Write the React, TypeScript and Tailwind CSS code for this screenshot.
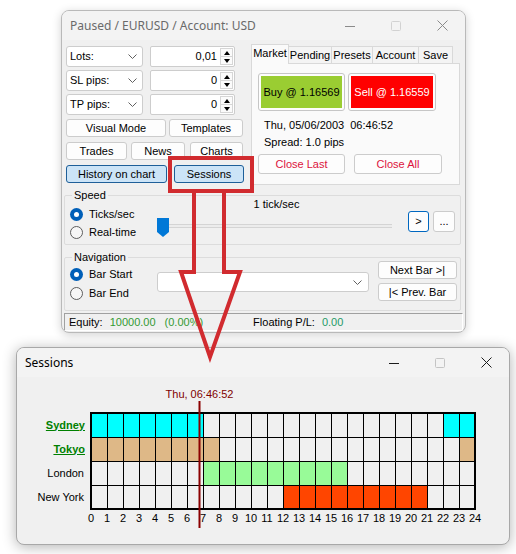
import React from "react";

function Chevron() {
  return (
    <svg width="9" height="5" viewBox="0 0 9 5">
      <polyline points="0.5,0.5 4.5,4.5 8.5,0.5" fill="none" stroke="#606060" strokeWidth="1" />
    </svg>
  );
}

function Combo({ label }: { label: string }) {
  return (
    <div className="flex items-center justify-between h-[21px] w-[77px] bg-white border border-[#cdcdcd] rounded-[3px] pl-[3px] pr-[5px]">
      <span className="text-[11px] text-black">{label}</span>
      <Chevron />
    </div>
  );
}

function Spin({ v }: { v: string }) {
  return (
    <div className="flex items-center h-[21px] w-[85px] bg-white border border-[#cdcdcd] rounded-[2px]">
      <div className="flex-1 text-right pr-[3px] text-[11px] text-black">{v}</div>
      <div className="flex flex-col w-[13px] h-[17px] mr-[1px] border border-[#d6d6d6] bg-[#fbfbfb]">
        <div className="flex-1 flex items-center justify-center border-b border-[#d6d6d6]">
          <div className="w-0 h-0 border-l-[3px] border-r-[3px] border-b-[4px] border-l-transparent border-r-transparent border-b-black" />
        </div>
        <div className="flex-1 flex items-center justify-center">
          <div className="w-0 h-0 border-l-[3px] border-r-[3px] border-t-[4px] border-l-transparent border-r-transparent border-t-black" />
        </div>
      </div>
    </div>
  );
}

function Btn({ children, className }: { children: React.ReactNode; className: string }) {
  return (
    <div className={"flex items-center justify-center rounded-[3px] border text-[11px] " + className}>
      {children}
    </div>
  );
}

function Radio({ on, label }: { on: boolean; label: string }) {
  return (
    <div className="flex items-center h-[14px]">
      {on ? (
        <span className="w-[13px] h-[13px] rounded-full bg-[#005fb8] flex items-center justify-center">
          <span className="w-[5px] h-[5px] rounded-full bg-white" />
        </span>
      ) : (
        <span className="w-[13px] h-[13px] rounded-full border border-[#5d5d5d] bg-[#f6f6f6]" />
      )}
      <span className="ml-[6px] text-[11px] text-black">{label}</span>
    </div>
  );
}

function Caption({ active }: { active: boolean }) {
  const c = active ? "#1b1b1b" : "#8a8a8a";
  const d = active ? "#c4c4c4" : "#d2d2d2";
  return (
    <div className="flex h-full">
      <div className="w-[46px] flex items-center justify-center">
        <svg width="10" height="10" viewBox="0 0 10 10">
          <line x1="0" y1="5.5" x2="10" y2="5.5" stroke={c} strokeWidth="1" />
        </svg>
      </div>
      <div className="w-[46px] flex items-center justify-center">
        <svg width="10" height="10" viewBox="0 0 10 10">
          <rect x="0.5" y="0.5" width="9" height="9" rx="1" fill="none" stroke={d} strokeWidth="1" />
        </svg>
      </div>
      <div className="w-[46px] flex items-center justify-center">
        <svg width="11" height="11" viewBox="0 0 11 11">
          <line x1="0.5" y1="0.5" x2="10.5" y2="10.5" stroke={c} strokeWidth="1" />
          <line x1="10.5" y1="0.5" x2="0.5" y2="10.5" stroke={c} strokeWidth="1" />
        </svg>
      </div>
    </div>
  );
}

function TitleBar({ title, active }: { title: string; active: boolean }) {
  return (
    <div className="flex items-center h-[29px] bg-[#f3f3f3] shrink-0">
      <div
        className={
          "flex-1 pl-[8px] text-[12px] font-['Segoe_UI','Noto_Sans',sans-serif] " +
          (active ? "text-black" : "text-[#6a6a6a]")
        }
      >
        {title}
      </div>
      <Caption active={active} />
    </div>
  );
}

function MainWindow() {
  const tabs = [
    { t: "Pending", w: "w-[43px]" },
    { t: "Presets", w: "w-[41px]" },
    { t: "Account", w: "w-[46px]" },
    { t: "Save", w: "w-[34px]" },
  ];
  return (
    <div className="ml-[61px] mt-[10px] w-[405px] h-[323px] rounded-[8px] border border-[#b9b9b9] bg-[#f0f0f0] shadow-[0_2px_10px_rgba(0,0,0,0.18)] overflow-hidden flex flex-col">
      <TitleBar title="Paused / EURUSD / Account: USD" active={false} />
      <div className="flex flex-col">
        <div className="flex pl-[4px] pt-[4px]">
          {/* left column */}
          <div className="flex flex-col w-[178px] mt-[2px]">
            <div className="flex gap-[7px]">
              <Combo label="Lots:" />
              <Spin v="0,01" />
            </div>
            <div className="flex gap-[7px] mt-[3px]">
              <Combo label="SL pips:" />
              <Spin v="0" />
            </div>
            <div className="flex gap-[7px] mt-[3px]">
              <Combo label="TP pips:" />
              <Spin v="0" />
            </div>
            <div className="flex mt-[4px]">
              <Btn className="w-[100px] h-[18px] bg-[#fdfdfd] border-[#cccccc] text-black">Visual Mode</Btn>
              <Btn className="w-[74px] h-[18px] ml-[3px] bg-[#fdfdfd] border-[#cccccc] text-black">Templates</Btn>
            </div>
            <div className="flex mt-[5px]">
              <Btn className="w-[61px] h-[18px] bg-[#fdfdfd] border-[#cccccc] text-black">Trades</Btn>
              <Btn className="w-[54px] h-[18px] ml-[4px] bg-[#fdfdfd] border-[#cccccc] text-black">News</Btn>
              <Btn className="w-[53px] h-[18px] ml-[5px] bg-[#fdfdfd] border-[#cccccc] text-black">Charts</Btn>
            </div>
            <div className="flex mt-[5px]">
              <Btn className="w-[101px] h-[18px] bg-[#cce4f7] border-[#1e5f99] text-black">History on chart</Btn>
              <Btn className="w-[70px] h-[18px] ml-[7px] bg-[#cce4f7] border-[#1e5f99] text-black">Sessions</Btn>
            </div>
          </div>
          {/* tabs */}
          <div className="flex flex-col ml-[7px] w-[209px]">
            <div className="flex items-end">
              <div className="relative z-10 mb-[-1px] h-[20px] w-[38px] bg-[#fafafa] border border-b-0 border-[#d9d9d9] flex items-center justify-center text-[11px] text-black pb-[2px]">
                Market
              </div>
              {tabs.map((x) => (
                <div
                  key={x.t}
                  className={
                    "h-[17px] border border-l-0 border-b-0 border-[#d9d9d9] bg-[#f4f4f4] flex items-center justify-center text-[11px] text-black " +
                    x.w
                  }
                >
                  {x.t}
                </div>
              ))}
            </div>
            <div className="h-[122px] border border-[#d9d9d9] bg-[#fafafa] flex flex-col pl-[6px] pt-[9px]">
              <div className="flex">
                <div className="w-[87px] h-[38px] rounded-[3px] border border-[#c6c6c6] p-[2px] bg-[#fdfdfd]">
                  <div className="w-full h-full bg-[#9acd32] flex items-center justify-center text-[11px] text-black">
                    Buy @ 1.16569
                  </div>
                </div>
                <div className="w-[88px] h-[38px] ml-[3px] rounded-[3px] border border-[#c6c6c6] p-[2px] bg-[#fdfdfd]">
                  <div className="w-full h-full bg-[#ff0000] flex items-center justify-center text-[11px] text-white">
                    Sell @ 1.16559
                  </div>
                </div>
              </div>
              <div className="ml-[6px] mt-[7px] h-[14px] leading-[14px] text-[11px] text-black whitespace-pre">
                {"Thu, 05/06/2003  06:46:52"}
              </div>
              <div className="ml-[6px] mt-[3px] h-[14px] leading-[14px] text-[11px] text-black">Spread: 1.0 pips</div>
              <div className="flex mt-[5px]">
                <Btn className="w-[87px] h-[20px] bg-[#fdfdfd] border-[#cccccc] text-[#dc143c]">Close Last</Btn>
                <Btn className="w-[88px] h-[20px] ml-[9px] bg-[#fdfdfd] border-[#cccccc] text-[#dc143c]">Close All</Btn>
              </div>
            </div>
          </div>
        </div>

        {/* Speed group */}
        <div className="relative ml-[2px] mt-[10px] w-[397px] h-[50px] border border-[#dcdcdc] rounded-[2px] flex">
          <div className="absolute left-[7px] top-[-8px] px-[2px] bg-[#f0f0f0] text-[11px] leading-[14px] text-black">Speed</div>
          <div className="w-[92px] pl-[5px] pt-[11px] flex flex-col gap-[4px]">
            <Radio on={true} label="Ticks/sec" />
            <Radio on={false} label="Real-time" />
          </div>
          <div className="w-[235px] flex flex-col pt-[1px]">
            <div className="h-[14px] leading-[14px] text-[11px] text-black text-center pl-[4px]">1 tick/sec</div>
            <div className="relative mt-[7px] h-[19px]">
              <div className="absolute left-0 right-0 top-[6px] h-[4px] border-y border-[#d4d4d4] bg-[#ececec]" />
              <svg className="absolute left-0 top-0" width="12" height="19" viewBox="0 0 12 19">
                <polygon points="0,0 12,0 12,14 6,19 0,14" fill="#0078d7" />
              </svg>
            </div>
          </div>
          <div className="flex mt-[15px] ml-[16px]">
            <Btn className="w-[21px] h-[21px] bg-[#fdfdfd] border-[#0067c0] text-black">&gt;</Btn>
            <Btn className="w-[22px] h-[21px] ml-[4px] bg-[#fdfdfd] border-[#cccccc] text-black">...</Btn>
          </div>
        </div>

        {/* Navigation group */}
        <div className="relative ml-[2px] mt-[12px] w-[397px] h-[54px] border border-[#dcdcdc] rounded-[2px] flex">
          <div className="absolute left-[7px] top-[-8px] px-[2px] bg-[#f0f0f0] text-[11px] leading-[14px] text-black">Navigation</div>
          <div className="w-[92px] pl-[5px] pt-[9px] flex flex-col gap-[5px]">
            <Radio on={true} label="Bar Start" />
            <Radio on={false} label="Bar End" />
          </div>
          <div className="mt-[14px] w-[212px] h-[20px] bg-white border border-[#cdcdcd] rounded-[3px] flex items-center justify-end pr-[6px]">
            <Chevron />
          </div>
          <div className="flex flex-col ml-[9px] mt-[3px]">
            <Btn className="w-[79px] h-[18px] bg-[#fdfdfd] border-[#cccccc] text-black">Next Bar &gt;|</Btn>
            <Btn className="w-[79px] h-[18px] mt-[4px] bg-[#fdfdfd] border-[#cccccc] text-black">|&lt; Prev. Bar</Btn>
          </div>
        </div>

        {/* status bar */}
        <div className="ml-[2px] mt-[2px] w-[399px] h-[18px] border-t border-l border-[#a0a0a0] border-r border-r-white border-b border-b-white flex items-center pl-[4px] text-[11px] whitespace-pre">
          <span className="text-black">Equity: </span>
          <span className="ml-[4px] text-[#339a33]">10000.00</span>
          <span className="ml-[9px] text-[#339a33]">(0.00%)</span>
          <span className="ml-[50px] text-black">Floating P/L: </span>
          <span className="ml-[4px] text-[#1f9a66]">0.00</span>
        </div>
      </div>
    </div>
  );
}

type Seg = [number, number];

function SessionsWindow() {
  const gx = 4;
  const gy = 27;
  const cw = 16;
  const rh = 24;
  const rows: { color: string; segs: Seg[] }[] = [
    { color: "#00ffff", segs: [[0, 7], [22, 24]] },
    { color: "#deb887", segs: [[0, 8], [23, 24]] },
    { color: "#98fb98", segs: [[7, 16]] },
    { color: "#ff4500", segs: [[12, 21]] },
  ];
  const nowX = gx + (6 + 46 / 60 + 52 / 3600) * cw;
  return (
    <div className="ml-[16px] mt-[14px] w-[494px] h-[198px] rounded-[8px] border border-[#a8a8a8] bg-[#f0f0f0] shadow-[0_2px_14px_rgba(0,0,0,0.3)] overflow-hidden flex flex-col">
      <TitleBar title="Sessions" active={true} />
      <div className="flex items-start">
        <div className="w-[70px] pt-[36px] pr-[2px] flex flex-col text-[11px]">
          <div className="h-[24px] flex items-center justify-end font-bold text-[#008000] underline">Sydney</div>
          <div className="h-[24px] flex items-center justify-end font-bold text-[#008000] underline">Tokyo</div>
          <div className="h-[24px] flex items-center justify-end text-black pr-[1px]">London</div>
          <div className="h-[24px] flex items-center justify-end text-black pr-[1px]">New York</div>
        </div>
        <svg className="mt-[9px]" width="400" height="145" viewBox="0 0 400 145">
          {rows.map((r, i) =>
            r.segs.map((s, j) => (
              <rect
                key={i + "-" + j}
                x={gx + s[0] * cw}
                y={gy + i * rh}
                width={(s[1] - s[0]) * cw}
                height={rh}
                fill={r.color}
              />
            ))
          )}
          {Array.from({ length: 23 }, (_, i) => (
            <line
              key={"v" + i}
              x1={gx + (i + 1) * cw + 0.5}
              x2={gx + (i + 1) * cw + 0.5}
              y1={gy}
              y2={gy + 4 * rh}
              stroke="#000"
              strokeWidth="1"
            />
          ))}
          {[1, 2, 3].map((j) => (
            <line
              key={"h" + j}
              x1={gx}
              x2={gx + 24 * cw}
              y1={gy + j * rh + 0.5}
              y2={gy + j * rh + 0.5}
              stroke="#000"
              strokeWidth="1"
            />
          ))}
          <rect x={gx} y={gy} width={24 * cw} height={4 * rh} fill="none" stroke="#000" strokeWidth="2" />
          <line x1={nowX} x2={nowX} y1={15} y2={142} stroke="#8b0000" strokeWidth="2" />
          <text
            x={nowX}
            y={12}
            textAnchor="middle"
            fontSize="11"
            fill="#800000"
            fontFamily="'Liberation Sans', Arial, sans-serif"
          >
            Thu, 06:46:52
          </text>
          {Array.from({ length: 25 }, (_, i) => (
            <text
              key={"t" + i}
              x={gx + i * cw}
              y={136}
              textAnchor="middle"
              fontSize="11"
              fill="#000"
              fontFamily="'Liberation Sans', Arial, sans-serif"
            >
              {i}
            </text>
          ))}
        </svg>
      </div>
    </div>
  );
}

export default function App() {
  return (
    <div className="relative w-[516px] h-[554px] bg-white overflow-hidden font-['Liberation_Sans',Arial,sans-serif] leading-none">
      <MainWindow />
      <SessionsWindow />
      <svg className="absolute left-0 top-0 pointer-events-none" width="516" height="554" viewBox="0 0 516 554">
        <rect x="170" y="158" width="82" height="33" fill="none" stroke="#d12b2f" strokeWidth="4" />
        <polyline
          points="194,193 194,272 181,272 210,357 240,272 224,272 224,193"
          fill="none"
          stroke="#d12b2f"
          strokeWidth="4"
          strokeLinejoin="miter"
        />
      </svg>
    </div>
  );
}
